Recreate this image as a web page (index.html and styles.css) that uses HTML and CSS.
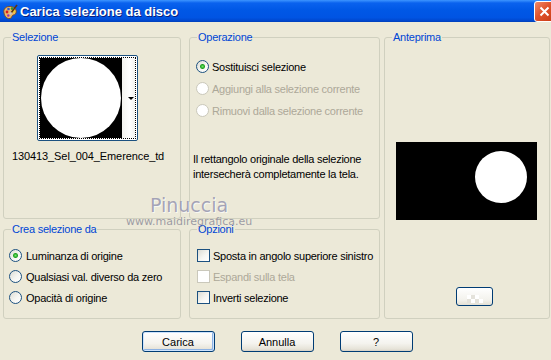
FILE: index.html
```html
<!DOCTYPE html>
<html lang="it">
<head>
  <meta charset="UTF-8">
  <title>Carica selezione da disco</title>
  <link rel="stylesheet" href="styles.css">
</head>
<body>
  <div class="window">
    <div class="titlebar">
      <svg class="app-icon" width="16" height="16" viewBox="0 0 16 16">
        <path d="M2 9 C1 5 4 2 8.5 2.5 C13 3 15 6 14 9 C13.5 11 11.5 10.5 10.5 11.5 C9.5 12.5 10 14 8 14.5 C4.5 15 2.5 12 2 9 Z" fill="#e9b66a" stroke="#7a4a1e" stroke-width="0.9"/>
        <circle cx="5" cy="8" r="1.4" fill="#d81f1f"/>
        <circle cx="6.5" cy="5" r="1.3" fill="#2a5ad8"/>
        <circle cx="10" cy="4.6" r="1.3" fill="#2a9a2a"/>
        <circle cx="12" cy="7.4" r="1.2" fill="#f0d020"/>
        <circle cx="6.3" cy="11.5" r="1.2" fill="#9b2fb0"/>
        <path d="M15 1 L9 9" stroke="#5a3312" stroke-width="1.6"/>
        <path d="M9.5 8.4 L8 10.5" stroke="#c8c8c8" stroke-width="2"/>
      </svg>
      <span class="title">Carica selezione da disco</span>
      <span class="close">
        <svg width="11" height="11" viewBox="0 0 11 11">
          <path d="M1.5 1.5 L9.5 9.5 M9.5 1.5 L1.5 9.5" stroke="#fff" stroke-width="2"/>
        </svg>
      </span>
    </div>

    <div class="content">
      <div class="groups">
        <fieldset class="group group-sel">
          <legend>Selezione</legend>
          <div class="thumb">
            <div class="focus">
              <div class="sel-img"><div class="disc"></div></div>
              <div class="drop"><span class="arrow"></span></div>
            </div>
          </div>
          <div class="filename">130413_Sel_004_Emerence_td</div>
        </fieldset>

        <fieldset class="group group-op">
          <legend>Operazione</legend>
          <div class="options options-op">
            <div class="option"><span class="radio checked"></span>Sostituisci selezione</div>
            <div class="option disabled"><span class="radio"></span>Aggiungi alla selezione corrente</div>
            <div class="option disabled"><span class="radio"></span>Rimuovi dalla selezione corrente</div>
          </div>
          <p class="note">Il rettangolo originale della selezione<br>intersecherà completamente la tela.</p>
        </fieldset>

        <fieldset class="group group-preview">
          <legend>Anteprima</legend>
          <div class="preview"><div class="preview-disc"></div></div>
          <div class="mini-btn">
            <svg width="16" height="8" viewBox="0 0 16 8">
              <rect x="0" y="0" width="4" height="4" fill="#fff"/>
              <rect x="4" y="0" width="4" height="4" fill="#e4e2da"/>
              <rect x="8" y="0" width="4" height="4" fill="#fff"/>
              <rect x="0" y="4" width="4" height="4" fill="#e4e2da"/>
              <rect x="4" y="4" width="4" height="4" fill="#fff"/>
              <rect x="8" y="4" width="4" height="4" fill="#e4e2da"/>
              <rect x="12" y="4" width="4" height="4" fill="#fff"/>
            </svg>
          </div>
        </fieldset>

        <fieldset class="group group-crea">
          <legend>Crea selezione da</legend>
          <div class="options options-low">
            <div class="option"><span class="radio checked"></span>Luminanza di origine</div>
            <div class="option"><span class="radio"></span>Qualsiasi val. diverso da zero</div>
            <div class="option"><span class="radio"></span>Opacità di origine</div>
          </div>
        </fieldset>

        <fieldset class="group group-opts">
          <legend>Opzioni</legend>
          <div class="options options-low options-check">
            <div class="option"><span class="check"></span>Sposta in angolo superiore sinistro</div>
            <div class="option disabled"><span class="check"></span>Espandi sulla tela</div>
            <div class="option"><span class="check"></span>Inverti selezione</div>
          </div>
        </fieldset>
      </div>

      <div class="buttons">
        <button class="btn btn-default">Carica</button>
        <button class="btn">Annulla</button>
        <button class="btn">?</button>
      </div>
    </div>

    <div class="watermark">
      <div class="wm-name">Pinuccia</div>
      <div class="wm-site">www.maidiregrafica.eu</div>
    </div>
  </div>
</body>
</html>
```

FILE: styles.css
```css
body {
  margin: 0;
  background: #ece9d8;
  font-family: "Liberation Sans", Arial, sans-serif;
  font-size: 11px;
  letter-spacing: -0.25px;
  color: #000;
}

.window {
  position: relative;
  width: 551px;
  height: 360px;
  overflow: hidden;
  background: #ece9d8;
}

/* barra del titolo stile XP */
.titlebar {
  height: 22px;
  display: flex;
  align-items: center;
  background: linear-gradient(#3d95ff 0, #0a62ee 3px, #0058e6 45%, #0054e3 80%, #0046cc 95%, #003fb8 100%);
}

.app-icon {
  margin: 1px 2px 0 2px;
  flex: none;
}

.title {
  color: #fff;
  font-weight: bold;
  font-size: 13px;
  text-shadow: 1px 1px 0 #0a1e7a;
  letter-spacing: 0;
}

.close {
  margin-left: auto;
  margin-right: -4px;
  margin-top: 1px;
  width: 19px;
  height: 19px;
  border: 1px solid #fff;
  border-radius: 3px;
  background: linear-gradient(135deg, #f08a6a 0, #e0532c 45%, #c83a14 100%);
  display: flex;
  align-items: center;
  justify-content: center;
}

.content {
  padding: 9px 0 0 3px;
}

.groups {
  display: grid;
  grid-template-columns: 178px 8px 191px 4px 166px;
  grid-template-rows: 188px 96px;
  row-gap: 4px;
}

.group {
  margin: 0;
  padding: 0;
  min-width: 0;
  box-sizing: border-box;
  border: 1px solid #d0d0bf;
  border-radius: 3px;
}

.group legend {
  margin-left: 7px;
  padding: 0 1px;
  line-height: 13px;
  color: #0046d5;
}

.group-sel { grid-column: 1; grid-row: 1; }
.group-op { grid-column: 3; grid-row: 1; }
.group-preview { grid-column: 5; grid-row: 1 / 3; }
.group-crea { grid-column: 1; grid-row: 2; }
.group-opts { grid-column: 3; grid-row: 2; }

/* miniatura selezione */
.thumb {
  width: fit-content;
  margin: 11px 0 0 33px;
  padding: 1px;
  border: 1px solid #1c5180;
  border-radius: 2px;
  background: #fff;
}

.focus {
  display: flex;
  border: 1px dotted #000;
}

.sel-img {
  width: 82px;
  height: 80px;
  background: #000;
  display: flex;
  align-items: center;
  justify-content: center;
}

.disc {
  width: 80px;
  height: 80px;
  border-radius: 50%;
  background: #fff;
}

.drop {
  width: 13px;
  display: flex;
  align-items: center;
  justify-content: flex-end;
  background: linear-gradient(90deg, #f4f4f0, #fff 60%, #f2f2ee);
}

.arrow {
  margin-right: 1px;
  border-left: 3px solid transparent;
  border-right: 3px solid transparent;
  border-top: 3px solid #000;
}

.filename {
  margin: 9px 0 0 8px;
  line-height: 13px;
  letter-spacing: -0.1px;
}

/* opzioni radio / checkbox */
.options {
  display: flex;
  flex-direction: column;
  gap: 9px;
  margin: 16px 0 0 6px;
}

.options-low {
  gap: 8px;
  margin: 13px 0 0 5px;
}

.options-check {
  margin-left: 7px;
}

.option {
  display: flex;
  align-items: center;
  gap: 3px;
  height: 13px;
  white-space: nowrap;
}

.options-low .option { gap: 4px; }
.options-check .option { gap: 3px; }

.option.disabled {
  color: #aca899;
}

.radio {
  flex: none;
  width: 13px;
  height: 13px;
  box-sizing: border-box;
  border-radius: 50%;
  border: 1px solid #1c5180;
  background: linear-gradient(135deg, #dcdcd4, #f6f6f2 55%, #fff);
}

.radio.checked {
  background: radial-gradient(circle, #6ee86a 0, #21a121 2px, rgba(33, 161, 33, 0) 3px), linear-gradient(135deg, #dcdcd4, #f6f6f2 55%, #fff);
}

.check {
  flex: none;
  width: 13px;
  height: 13px;
  box-sizing: border-box;
  border: 1px solid #1c5180;
  background: linear-gradient(135deg, #dcdcd4, #f6f6f2 55%, #fff);
}

.disabled .radio,
.disabled .check {
  border-color: #cac8bb;
  background: #fff;
}

.note {
  margin: 35px 0 0 3px;
  line-height: 15px;
}

/* anteprima */
.preview {
  width: 141px;
  height: 78px;
  margin: 98px 0 0 11px;
  background: #000;
  display: flex;
  align-items: flex-start;
}

.preview-disc {
  width: 52px;
  height: 52px;
  margin: 9px 0 0 79px;
  border-radius: 50%;
  background: #fff;
}

.mini-btn {
  width: 37px;
  height: 19px;
  box-sizing: border-box;
  margin: 67px 0 0 71px;
  border: 1px solid #003c74;
  border-radius: 3px;
  background: linear-gradient(#fff, #f3f2ec 70%, #e3e0d4);
  display: flex;
  align-items: flex-end;
  justify-content: center;
  padding-bottom: 2px;
}

/* pulsanti */
.buttons {
  display: flex;
  justify-content: center;
  gap: 26px;
  margin-top: 12px;
}

.btn {
  width: 73px;
  height: 21px;
  padding: 0;
  font-family: "Liberation Sans", Arial, sans-serif;
  font-size: 11px;
  color: #000;
  border: 1px solid #003c74;
  border-radius: 3px;
  background: linear-gradient(#fff, #f4f3ee 60%, #e6e3d8 90%, #d6d0c5);
}

.btn-default {
  box-shadow: inset 0 0 0 1px #cde3fd, inset -1px -1px 0 1px #8db2e3;
}

/* filigrana */
.watermark {
  position: absolute;
  left: 126px;
  top: 195px;
  width: 123px;
  text-align: center;
  letter-spacing: 0;
  pointer-events: none;
}

.wm-name {
  font-family: "DejaVu Sans", sans-serif;
  font-size: 19px;
  line-height: 21px;
  padding-left: 3px;
  color: rgba(150, 150, 175, 0.85);
  text-shadow: 1px 1px 0 rgba(255, 255, 255, 0.7);
}

.wm-site {
  font-family: "DejaVu Sans", sans-serif;
  font-size: 11px;
  line-height: 11px;
  color: rgba(120, 120, 140, 0.7);
}
```
